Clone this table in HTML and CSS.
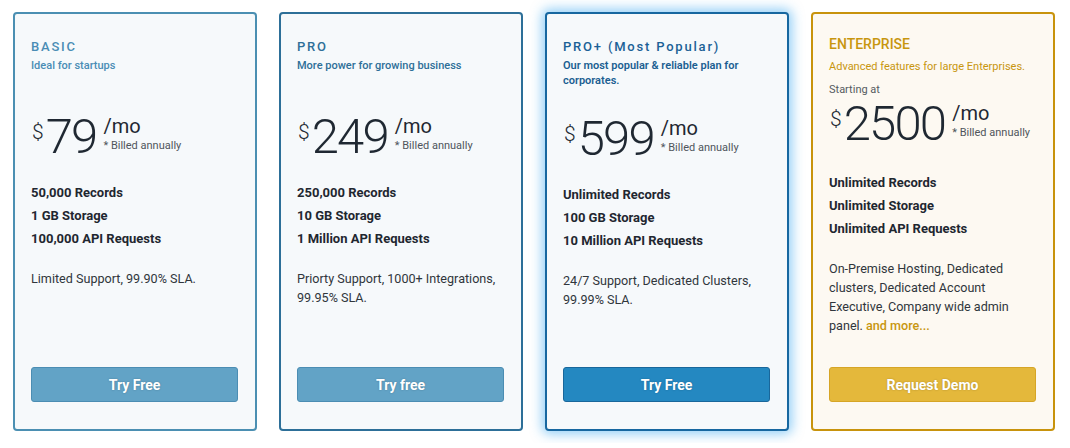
FILE: index.html
```html
<!DOCTYPE html>
<html lang="en">
<head>
<meta charset="utf-8">
<title>Pricing</title>
<link rel="stylesheet" href="styles.css">
</head>
<body>
<main class="plans">
  <section class="card card-basic">
    <header class="card-head">
      <h2 class="plan-name">BASIC</h2>
      <p class="plan-tag">Ideal for startups</p>
    </header>
    <div class="price">
      <span class="cur">$</span><span class="amt">79</span>
      <span class="per"><span class="mo">/mo</span><span class="billed">* Billed annually</span></span>
    </div>
    <ul class="feats">
      <li>50,000 Records</li>
      <li>1 GB Storage</li>
      <li>100,000 API Requests</li>
    </ul>
    <p class="desc">Limited Support, 99.90% SLA.</p>
    <button class="btn">Try Free</button>
  </section>

  <section class="card card-pro">
    <header class="card-head">
      <h2 class="plan-name">PRO</h2>
      <p class="plan-tag">More power for growing business</p>
    </header>
    <div class="price">
      <span class="cur">$</span><span class="amt">249</span>
      <span class="per"><span class="mo">/mo</span><span class="billed">* Billed annually</span></span>
    </div>
    <ul class="feats">
      <li>250,000 Records</li>
      <li>10 GB Storage</li>
      <li>1 Million API Requests</li>
    </ul>
    <p class="desc">Priorty Support, 1000+ Integrations, 99.95% SLA.</p>
    <button class="btn">Try free</button>
  </section>

  <section class="card card-plus">
    <header class="card-head">
      <h2 class="plan-name">PRO+ (Most Popular)</h2>
      <p class="plan-tag">Our most popular &amp; reliable plan for corporates.</p>
    </header>
    <div class="price">
      <span class="cur">$</span><span class="amt">599</span>
      <span class="per"><span class="mo">/mo</span><span class="billed">* Billed annually</span></span>
    </div>
    <ul class="feats">
      <li>Unlimited Records</li>
      <li>100 GB Storage</li>
      <li>10 Million API Requests</li>
    </ul>
    <p class="desc">24/7 Support, Dedicated Clusters, 99.99% SLA.</p>
    <button class="btn">Try Free</button>
  </section>

  <section class="card card-ent">
    <header class="card-head">
      <h2 class="plan-name">ENTERPRISE</h2>
      <p class="plan-tag">Advanced features for large Enterprises.</p>
    </header>
    <p class="starting">Starting at</p>
    <div class="price">
      <span class="cur">$</span><span class="amt">2500</span>
      <span class="per"><span class="mo">/mo</span><span class="billed">* Billed annually</span></span>
    </div>
    <ul class="feats">
      <li>Unlimited Records</li>
      <li>Unlimited Storage</li>
      <li>Unlimited API Requests</li>
    </ul>
    <p class="desc">On-Premise Hosting, Dedicated clusters, Dedicated Account Executive, Company wide admin panel. <a class="more" href="#">and more...</a></p>
    <button class="btn">Request Demo</button>
  </section>
</main>
</body>
</html>
```

FILE: styles.css
```css
* { box-sizing: border-box; }

html, body {
  margin: 0;
  padding: 0;
  background: #ffffff;
}

body {
  font-family: Roboto, "Liberation Sans", Arial, sans-serif;
  color: #222a33;
}

.plans {
  display: flex;
  gap: 22px;
  padding: 12px 13px;
}

.card {
  width: 244px;
  height: 419px;
  flex-shrink: 0;
  display: flex;
  flex-direction: column;
  padding: 25px 17px 27px 16px;
  background: #f6f9fb;
  border: 2px solid #4b8fb2;
  border-radius: 4px;
}

.card-pro { border-color: #2d6f98; }

.card-plus {
  border-color: #1767a0;
  box-shadow: 0 0 12px 3px rgba(40, 160, 240, 0.5);
}

.card-ent {
  padding-top: 22px;
  border-color: #c8930c;
  background: #fdf9f2;
}

.plan-name {
  margin: 0;
  font-size: 13px;
  line-height: 16px;
  font-weight: 500;
  letter-spacing: 1.8px;
  color: #4a8db5;
}

.card-pro .plan-name { color: #2e6f98; }
.card-plus .plan-name { color: #1b6196; }
.card-ent .plan-name {
  font-size: 14px;
  letter-spacing: 0;
  color: #c8960f;
}

.plan-tag {
  margin: 3px 0 0 0;
  font-size: 11px;
  line-height: 15px;
  font-weight: 500;
  color: #4a8db5;
}

.card-pro .plan-tag { color: #2e6f98; }
.card-plus .plan-tag { color: #1b5f92; font-weight: 600; }
.card-ent .plan-tag { color: #c8960f; font-weight: 400; margin-top: 7px; }

.starting {
  margin: 8px 0 0 0;
  font-size: 11px;
  line-height: 15px;
  color: #555b61;
}

.price {
  display: flex;
  align-items: flex-start;
  margin-top: 40px;
  height: 48px;
  white-space: nowrap;
}

.card-plus .price { margin-top: 27px; }
.card-ent .price { margin-top: 3px; }

.cur {
  font-size: 21px;
  font-weight: 300;
  line-height: 1;
  margin: 9px 2px 0 1px;
  color: #222a33;
}

.amt {
  font-size: 49px;
  font-weight: 300;
  line-height: 48px;
  letter-spacing: -1.8px;
  color: #1f2832;
}

.per {
  display: flex;
  flex-direction: column;
  flex-shrink: 0;
  margin-left: 7px;
  padding-top: 2px;
}

.mo {
  font-size: 20px;
  line-height: 22px;
  color: #1f2832;
}

.billed {
  font-size: 11px;
  line-height: 14px;
  margin-top: 2px;
  color: #4f555b;
}

.feats {
  list-style: none;
  margin: 20px 0 0 0;
  padding: 0;
}

.card-ent .feats { margin-top: 23px; }

.feats li {
  font-size: 13px;
  line-height: 23px;
  font-weight: 700;
  color: #1f2730;
}

.desc {
  margin: 19px 0 0 0;
  font-size: 12.6px;
  line-height: 19px;
  color: #30363c;
}

.more {
  color: #c8960f;
  font-weight: 500;
  text-decoration: none;
}

.btn {
  margin-top: auto;
  width: 100%;
  height: 35px;
  border: 1px solid #4b8db3;
  border-radius: 3px;
  background: #62a3c6;
  color: #ffffff;
  font-family: Roboto, "Liberation Sans", Arial, sans-serif;
  font-size: 14px;
  font-weight: 700;
  text-shadow: 0 0 2px rgba(0, 0, 0, 0.25);
  cursor: pointer;
}

.card-plus .btn {
  background: #2488c1;
  border-color: #19679b;
}

.card-ent .btn {
  background: #e4b83b;
  border-color: #d6a526;
}
```
